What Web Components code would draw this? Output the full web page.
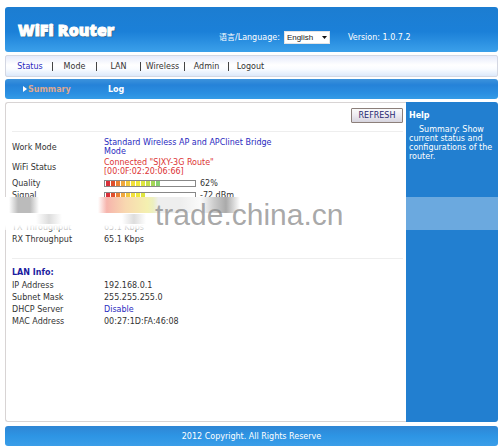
<!DOCTYPE html>
<html lang="en">
<head>
<meta charset="utf-8">
<title>WiFi Router</title>
<style>
    body {
        margin: 0;
        padding: 7px 2px 2px 5px;
        background: #fff;
        color: #333;
        font: 8px/9px "DejaVu Sans", "Noto Sans CJK SC", sans-serif;
    }
</style>
</head>
<body>
<router-page></router-page>

<script>
class RouterHeader extends HTMLElement {
    constructor() {
        super();
        this.attachShadow({ mode: 'open' });
    }

    connectedCallback() {
        this.shadowRoot.innerHTML = `
            <style>
                :host {
                    display: flex;
                    align-items: center;
                    box-sizing: border-box;
                    height: 45px;
                    padding: 0 13px;
                    border-radius: 3px;
                    background: linear-gradient(#1c7dd1, #1b80d8 55%, #3ba0ea);
                    color: #fff;
                }
                h1 {
                    flex: 0 0 201px;
                    margin: 0;
                    font: 900 16px/20px "Open Sans", sans-serif;
                    text-shadow: 1px 1px 1px #357;
                    -webkit-text-stroke: 1px #fff;
                }
                form {
                    display: flex;
                    align-items: center;
                    gap: 4px;
                    padding-top: 16px;
                }
                select {
                    width: 46px;
                    height: 13px;
                    padding: 0 2px;
                    border: 1px solid #e4e4e4;
                    background: #fff;
                    color: #222;
                    font: 8px "Liberation Sans", sans-serif;
                    appearance: none;
                }
                .select { position: relative; display: flex; }
                .select svg { position: absolute; right: 3px; top: 5px; pointer-events: none; }
                p { margin: 0 0 0 18px; padding-top: 16px; }
            </style>
            <h1>WiFi Router</h1>
            <form>
                <label for="lang">语言/Language:</label>
                <span class="select">
                    <select id="lang"><option>English</option></select>
                    <svg width="5" height="3"><path d="M0 0h5L2.5 3z" fill="#111"/></svg>
                </span>
            </form>
            <p>Version: ${this.getAttribute('version')}</p>
        `;
    }
}

class RouterMenu extends HTMLElement {
    constructor() {
        super();
        this.attachShadow({ mode: 'open' });
    }

    connectedCallback() {
        this.shadowRoot.innerHTML = `
            <style>
                :host {
                    display: block;
                    margin-top: 3px;
                    border: 1px solid #d4d7e2;
                    border-radius: 2px;
                    background: linear-gradient(#e6eafa, #fff 45%, #fafcff 65%, #dce9fb);
                }
                nav {
                    display: grid;
                    grid-template-columns: 45px repeat(5, 44px);
                    align-items: center;
                    height: 20px;
                    padding-left: 1px;
                }
                a {
                    border-left: 1px solid #444;
                    color: #333;
                    text-align: center;
                    text-decoration: none;
                    white-space: nowrap;
                }
                a:first-child { border-color: transparent; }
                a.active { color: #2a2ac0; }
            </style>
            <nav>
                <a class="active" href="#status">Status</a>
                <a href="#mode">Mode</a>
                <a href="#lan">LAN</a>
                <a href="#wireless">Wireless</a>
                <a href="#admin">Admin</a>
                <a href="#logout">Logout</a>
            </nav>
        `;
    }
}

class RouterTabs extends HTMLElement {
    constructor() {
        super();
        this.attachShadow({ mode: 'open' });
    }

    connectedCallback() {
        this.shadowRoot.innerHTML = `
            <style>
                :host {
                    display: block;
                    margin-top: 2px;
                    border-radius: 3px;
                    background: linear-gradient(#3d93dc, #2582d8 30%, #2b90e2 75%, #359ce6);
                }
                nav {
                    display: grid;
                    grid-template-columns: 85px 80px;
                    align-items: center;
                    height: 20px;
                    padding-left: 18px;
                }
                a {
                    display: flex;
                    align-items: center;
                    gap: 1px;
                    color: #fff;
                    font-weight: bold;
                    text-decoration: none;
                }
                a.active { color: #dca890; }
            </style>
            <nav>
                <a class="active" href="#summary"><svg width="4" height="6"><path d="M0 0l4 3-4 3z" fill="#fff"/></svg>Summary</a>
                <a href="#log">Log</a>
            </nav>
        `;
    }
}

class SignalMeter extends HTMLElement {
    constructor() {
        super();
        this.attachShadow({ mode: 'open' });
    }

    connectedCallback() {
        const colors = ['#d9303a', '#e0502c', '#ea8034', '#f0a83c', '#f2c93c', '#f2e03a', '#efe93c', '#dfe63e', '#c4de4a', '#a4d656', '#86cf72'];
        const bars = colors.slice(0, Number(this.getAttribute('bars')));

        this.shadowRoot.innerHTML = `
            <style>
                :host { display: flex; align-items: center; gap: 4px; }
                .meter {
                    display: flex;
                    gap: 1px;
                    box-sizing: border-box;
                    width: 92px;
                    height: 7px;
                    padding: 0 1px;
                    border: 1px solid #888;
                    background: #fff;
                }
                i { width: 4px; }
            </style>
            <div class="meter">${bars.map(c => `<i style="background:${c}"></i>`).join('')}</div>
            <slot></slot>
        `;
    }
}

class StatusPanel extends HTMLElement {
    constructor() {
        super();
        this.attachShadow({ mode: 'open' });
    }

    connectedCallback() {
        this.shadowRoot.innerHTML = `
            <style>
                :host {
                    display: block;
                    padding: 5px 3px 0 6px;
                    border: 1px solid #d8d4d4;
                    border-right: 0;
                    border-radius: 3px 0 0 3px;
                    background: #fff;
                }
                .tools {
                    display: flex;
                    justify-content: flex-end;
                    padding-bottom: 8px;
                    border-bottom: 1px solid #eee;
                }
                button {
                    width: 52px;
                    height: 15px;
                    padding: 0;
                    border: 1px solid #8c7f7a;
                    border-radius: 1px;
                    background: linear-gradient(#fafafa, #eceaf0 50%, #d6d4de);
                    color: #2a2a72;
                    font: inherit;
                }
                table { width: 100%; border-collapse: collapse; }
                th, td { height: 12px; padding: 0; font-weight: normal; text-align: left; }
                th { width: 92px; }
                tr.tall > * { height: 20px; }
                .status { margin-top: 5px; }
                .lan { border-top: 1px solid #eee; margin-top: 13px; padding-top: 8px; }
                .blue { color: #2a2ac0; }
                .red { color: #dc3434; }
                h2 { margin: 0; color: #1c1ca0; font-size: 8px; line-height: 12px; }
            </style>
            <div class="tools"><button type="button">REFRESH</button></div>
            <table class="status">
                <tr class="tall"><th>Work Mode</th><td class="blue">Standard Wireless AP and APClinet Bridge<br>Mode</td></tr>
                <tr class="tall"><th>WiFi Status</th><td class="red">Connected "SJXY-3G Route"<br>[00:0F:02:20:06:66]</td></tr>
                <tr><th>Quality</th><td><signal-meter bars="11">62%</signal-meter></td></tr>
                <tr><th>Signal</th><td><signal-meter bars="8">-72 dBm</signal-meter></td></tr>
                <tr class="tall"><th></th><td></td></tr>
                <tr><th>TX Throughput</th><td>65.1 Kbps</td></tr>
                <tr><th>RX Throughput</th><td>65.1 Kbps</td></tr>
            </table>
            <section class="lan">
                <h2>LAN Info:</h2>
                <table>
                    <tr><th>IP Address</th><td>192.168.0.1</td></tr>
                    <tr><th>Subnet Mask</th><td>255.255.255.0</td></tr>
                    <tr><th>DHCP Server</th><td class="blue">Disable</td></tr>
                    <tr><th>MAC Address</th><td>00:27:1D:FA:46:08</td></tr>
                </table>
            </section>
        `;
    }
}

class HelpPanel extends HTMLElement {
    constructor() {
        super();
        this.attachShadow({ mode: 'open' });
    }

    connectedCallback() {
        this.shadowRoot.innerHTML = `
            <style>
                :host {
                    display: block;
                    padding: 9px 3px;
                    border-radius: 0 3px 3px 0;
                    background: #227fd0;
                    color: #fff;
                }
                h2 { margin: 0 0 4px; font-size: 8px; line-height: 10px; }
                p { margin: 0; text-indent: 10px; }
            </style>
            <h2>Help</h2>
            <p><slot></slot></p>
        `;
    }
}

class WaterMark extends HTMLElement {
    constructor() {
        super();
        this.attachShadow({ mode: 'open' });
    }

    connectedCallback() {
        // soft smudges first, then the white band that fades at its lower edge
        this.shadowRoot.innerHTML = `
            <style>
                :host {
                    position: absolute;
                    inset: 95px -2px auto -5px;
                    display: grid;
                    grid-template-columns: 1fr 94px;
                    height: 33px;
                    pointer-events: none;
                }
                .text {
                    padding-left: 155px;
                    background:
                        linear-gradient(90deg, #bbb0, #bbb 30%, #bbb 70%, #bbb0) 9px 0 / 30px 16px,
                        linear-gradient(90deg, #f6c4bc00, #f6b4ac 8%, #f8d8b0 25%, #f4f0b0 45%, #ecefc0, #eee 55%, #eee 75%, #eee0) 98px 0 / 110px 16px,
                        linear-gradient(90deg, #ccc0, #ccc 35%, #aaa 65%, #aaa0) 200px 0 / 40px 16px,
                        linear-gradient(90deg, #ddd0, #ddd, #ddd0) 36px 17px / 26px 10px,
                        linear-gradient(90deg, #ddd0, #ddd, #ddd0) 122px 17px / 24px 10px,
                        linear-gradient(#fff, #fff 28px, #fffa);
                    background-repeat: no-repeat;
                    color: #888b;
                    font: 30px/36px "Liberation Sans", sans-serif;
                    white-space: nowrap;
                    height: 33px;
                }
                .shade { background: #fff5; }
            </style>
            <div class="text">trade.china.cn</div>
            <div class="shade"></div>
        `;
    }
}

class RouterPage extends HTMLElement {
    constructor() {
        super();
        this.attachShadow({ mode: 'open' });
    }

    connectedCallback() {
        this.shadowRoot.innerHTML = `
            <style>
                :host { display: block; }
                main {
                    position: relative;
                    display: grid;
                    grid-template-columns: 1fr 92px;
                    min-height: 320px;
                    margin-top: 3px;
                }
                footer {
                    margin-top: 4px;
                    padding-top: 1px;
                    border-radius: 3px;
                    background: linear-gradient(#2f86d4, #2d95e4 50%, #3a9de8);
                    color: #fff;
                    line-height: 19px;
                    text-align: center;
                }
            </style>
            <router-header version="1.0.7.2"></router-header>
            <router-menu></router-menu>
            <router-tabs></router-tabs>
            <main>
                <status-panel></status-panel>
                <help-panel>Summary: Show current status and configurations of the router.</help-panel>
                <water-mark></water-mark>
            </main>
            <footer>2012 Copyright. All Rights Reserve</footer>
        `;
    }
}

customElements.define('router-header', RouterHeader);
customElements.define('router-menu', RouterMenu);
customElements.define('router-tabs', RouterTabs);
customElements.define('signal-meter', SignalMeter);
customElements.define('status-panel', StatusPanel);
customElements.define('help-panel', HelpPanel);
customElements.define('water-mark', WaterMark);
customElements.define('router-page', RouterPage);
</script>
</body>
</html>
